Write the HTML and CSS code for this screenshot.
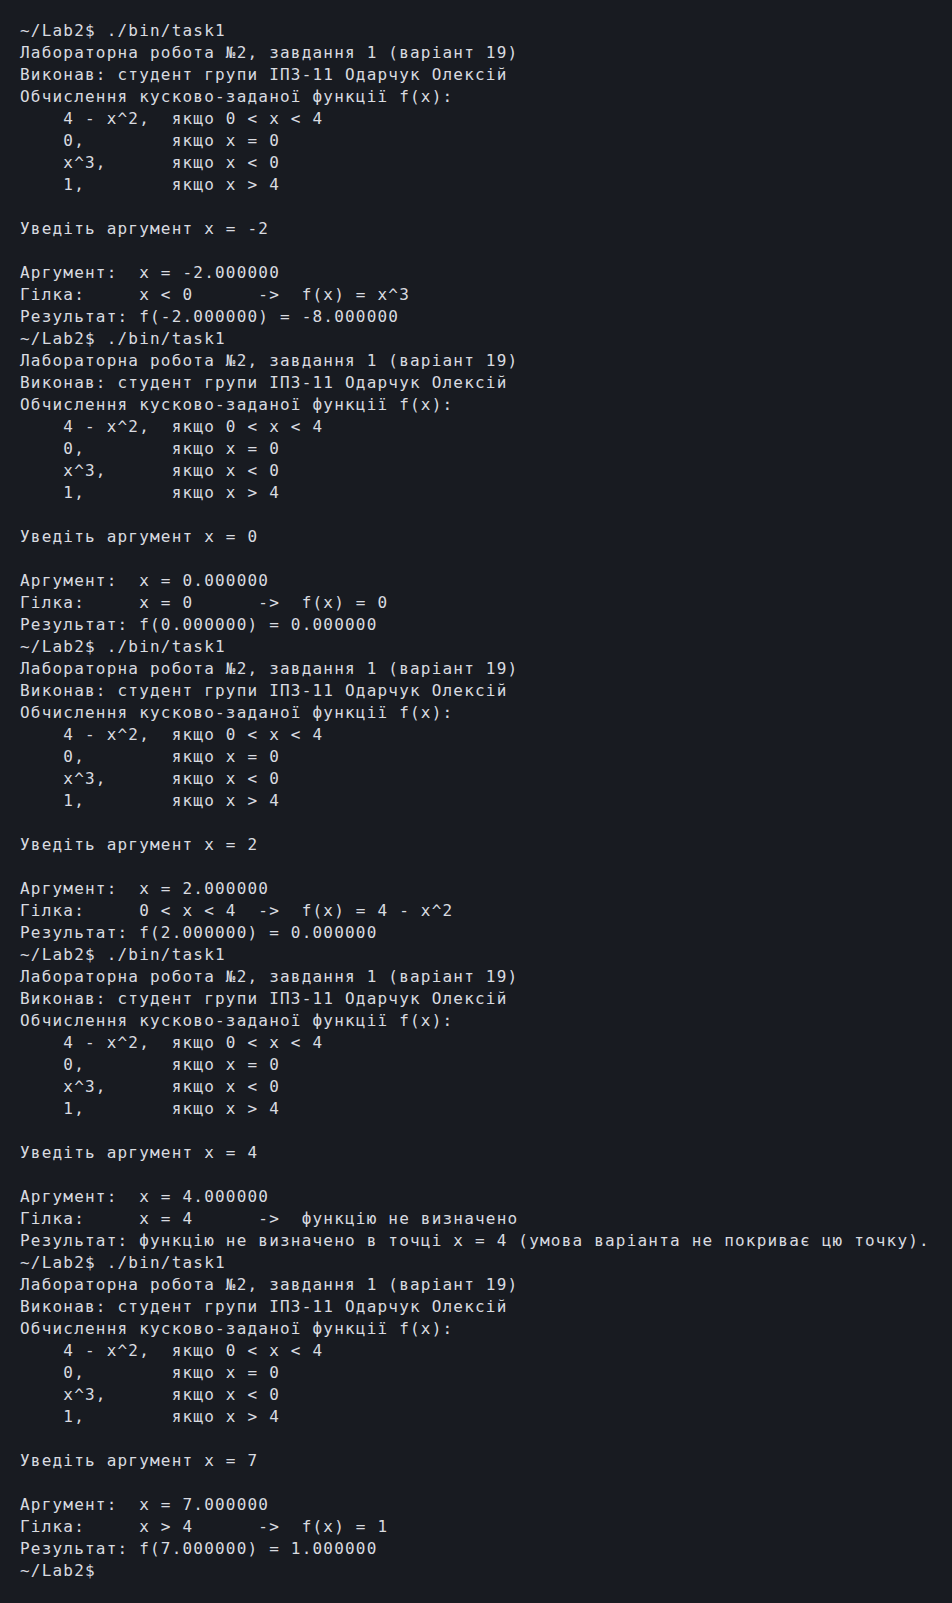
FILE: index.html
```html
<!DOCTYPE html>
<html lang="uk">
<head>
<meta charset="utf-8">
<title>Terminal</title>
<link rel="stylesheet" href="styles.css">
</head>
<body>
<pre class="term">~/Lab2$ ./bin/task1
Лабораторна робота №2, завдання 1 (варіант 19)
Виконав: студент групи ІП3-11 Одарчук Олексій
Обчислення кусково-заданої функції f(x):
    4 - x^2,  якщо 0 &lt; x &lt; 4
    0,        якщо x = 0
    x^3,      якщо x &lt; 0
    1,        якщо x &gt; 4

Уведіть аргумент x = -2

Аргумент:  x = -2.000000
Гілка:     x &lt; 0      -&gt;  f(x) = x^3
Результат: f(-2.000000) = -8.000000
~/Lab2$ ./bin/task1
Лабораторна робота №2, завдання 1 (варіант 19)
Виконав: студент групи ІП3-11 Одарчук Олексій
Обчислення кусково-заданої функції f(x):
    4 - x^2,  якщо 0 &lt; x &lt; 4
    0,        якщо x = 0
    x^3,      якщо x &lt; 0
    1,        якщо x &gt; 4

Уведіть аргумент x = 0

Аргумент:  x = 0.000000
Гілка:     x = 0      -&gt;  f(x) = 0
Результат: f(0.000000) = 0.000000
~/Lab2$ ./bin/task1
Лабораторна робота №2, завдання 1 (варіант 19)
Виконав: студент групи ІП3-11 Одарчук Олексій
Обчислення кусково-заданої функції f(x):
    4 - x^2,  якщо 0 &lt; x &lt; 4
    0,        якщо x = 0
    x^3,      якщо x &lt; 0
    1,        якщо x &gt; 4

Уведіть аргумент x = 2

Аргумент:  x = 2.000000
Гілка:     0 &lt; x &lt; 4  -&gt;  f(x) = 4 - x^2
Результат: f(2.000000) = 0.000000
~/Lab2$ ./bin/task1
Лабораторна робота №2, завдання 1 (варіант 19)
Виконав: студент групи ІП3-11 Одарчук Олексій
Обчислення кусково-заданої функції f(x):
    4 - x^2,  якщо 0 &lt; x &lt; 4
    0,        якщо x = 0
    x^3,      якщо x &lt; 0
    1,        якщо x &gt; 4

Уведіть аргумент x = 4

Аргумент:  x = 4.000000
Гілка:     x = 4      -&gt;  функцію не визначено
Результат: функцію не визначено в точці x = 4 (умова варіанта не покриває цю точку).
~/Lab2$ ./bin/task1
Лабораторна робота №2, завдання 1 (варіант 19)
Виконав: студент групи ІП3-11 Одарчук Олексій
Обчислення кусково-заданої функції f(x):
    4 - x^2,  якщо 0 &lt; x &lt; 4
    0,        якщо x = 0
    x^3,      якщо x &lt; 0
    1,        якщо x &gt; 4

Уведіть аргумент x = 7

Аргумент:  x = 7.000000
Гілка:     x &gt; 4      -&gt;  f(x) = 1
Результат: f(7.000000) = 1.000000
~/Lab2$</pre>
</body>
</html>
```
FILE: styles.css
```css
html, body {
  margin: 0;
  padding: 0;
  background: #181b21;
}
body {
  min-height: 1603px;
}
.term {
  margin: 0;
  padding: 20px 20px 0 20px;
  font-family: "DejaVu Sans Mono", monospace;
  font-size: 16px;
  line-height: 22px;
  letter-spacing: 1.2px;
  color: #d9dbe0;
  white-space: pre;
}
```
